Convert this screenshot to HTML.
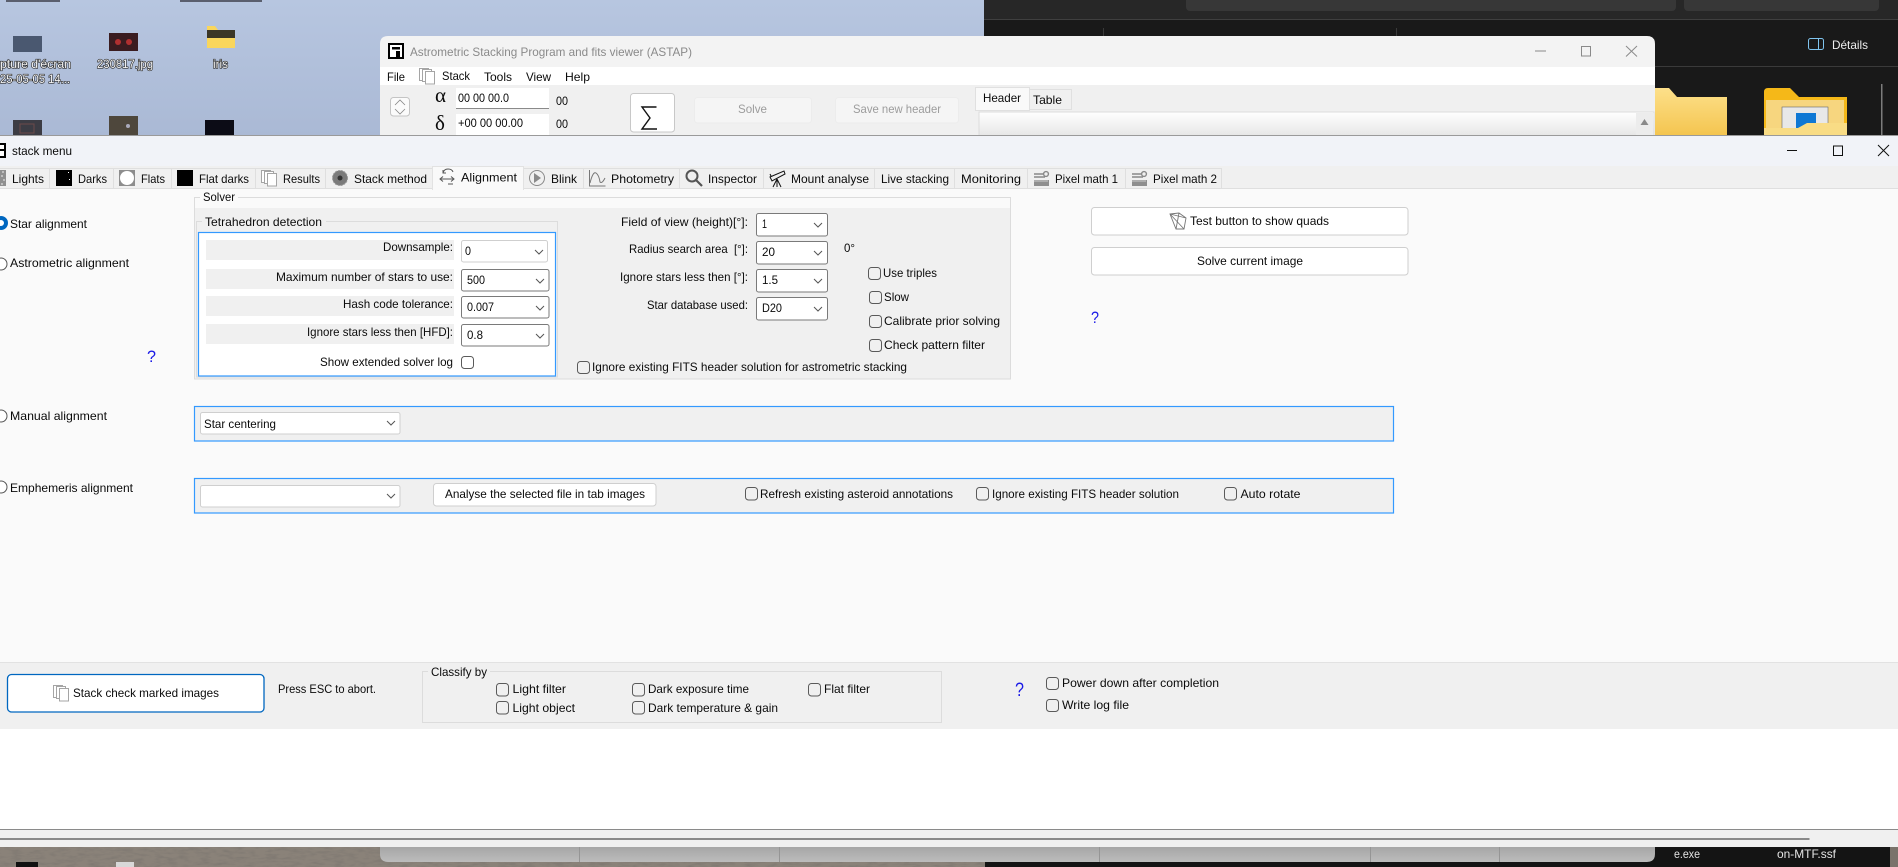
<!DOCTYPE html>
<html lang="en"><head><meta charset="utf-8"><title>stack menu</title>
<style>
html,body{margin:0;padding:0;width:1898px;height:867px;overflow:hidden;background:#b5c4de}
svg{display:block}
text{font-family:"Liberation Sans",sans-serif;font-size:12px;fill:#0a0a0a;white-space:pre}
.g{fill:#8a8a8a}.gd{fill:#9c9c9c}
.q{fill:#1a1ae6;font-size:17px}
.dk{fill:#f4f4f4;stroke:#2b2b2b;stroke-width:1.3px;paint-order:stroke}
.cb{fill:none;stroke:#5a5a5a;stroke-width:1}
.cmb{fill:#fff;stroke:#7a7a7a;stroke-width:1}
.cml{fill:#fff;stroke:#cfcfcf;stroke-width:1}
.chev{fill:none;stroke:#555;stroke-width:1}
.lbl{fill:#f0f0f0}
.grp{fill:none;stroke:#dcdcdc;stroke-width:1}
.blue{fill:#f0f0f0;stroke:#3399ff;stroke-width:1.2}
.btn{fill:#fff;stroke:#cfcfcf;stroke-width:1}
.tabd{stroke:#dfdfdf;stroke-width:1}
.win{stroke:#8a8a8a;stroke-width:1;fill:none}
.wint{stroke:#111;stroke-width:1;fill:none}
.radio{fill:#fff;stroke:#555;stroke-width:1}
</style></head><body>
<svg xmlns="http://www.w3.org/2000/svg" width="1898" height="867" viewBox="0 0 1898 867">
<defs>
<linearGradient id="desk" x1="0" y1="0" x2="0" y2="1"><stop offset="0" stop-color="#b7c6e0"/><stop offset="1" stop-color="#aab9d5"/></linearGradient>
<linearGradient id="strip" x1="0" y1="0" x2="0" y2="1"><stop offset="0" stop-color="#a6a6a6"/><stop offset="1" stop-color="#bcbcbc"/></linearGradient>
<linearGradient id="memo" x1="0" y1="0" x2="0" y2="1"><stop offset="0" stop-color="#ffffff"/><stop offset="1" stop-color="#e6e6e6"/></linearGradient>
<linearGradient id="fold" x1="0" y1="0" x2="0" y2="1"><stop offset="0" stop-color="#fde08a"/><stop offset="1" stop-color="#f4c550"/></linearGradient>
<filter id="sand" x="0" y="0" width="100%" height="100%"><feTurbulence type="fractalNoise" baseFrequency="0.09 0.35" numOctaves="3" seed="4"/><feColorMatrix values="0 0 0 0 0.2  0 0 0 0 0.18  0 0 0 0 0.16  1.8 0 0 0 -0.75"/></filter>
<g id="pages" fill="#fff" stroke="#a5a5a5" stroke-width="1"><rect x="0.5" y="0.5" width="9" height="12"/><rect x="3.5" y="1.5" width="9" height="12"/><rect x="6.5" y="3.5" width="9" height="12.5"/></g>
<g id="pm"><rect x="0" y="9" width="15" height="6" fill="#8f8f8f"/><path d="M1 9v2M3 9v2M5 9v2M7 9v2M9 9v2M11 9v2M13 9v2" stroke="#ddd" stroke-width=".8"/><path d="M0 3h9M0 6h11" stroke="#888" stroke-width="1.6" fill="none"/><circle cx="12" cy="3" r="2.4" fill="none" stroke="#888" stroke-width="1.4"/></g>
</defs>

<!-- desktop -->
<rect width="1898" height="136" fill="url(#desk)"/>
<rect x="6" y="0" width="54" height="2" fill="#5a5f6e"/><rect x="180" y="0" width="82" height="2" fill="#5a5f6e"/>
<rect x="13" y="36" width="29" height="16" fill="#4a5870"/>
<rect x="109" y="33" width="29" height="18" fill="#3a1c20"/><circle cx="118" cy="42" r="3" fill="#b03030"/><circle cx="129" cy="42" r="3" fill="#b03030"/>
<path d="M207 26h8l3 4h17v18h-28z" fill="#f9d65c"/><rect x="207" y="30" width="28" height="8" fill="#3b3626"/>
<text class="dk" x="0" y="68" textLength="71" lengthAdjust="spacingAndGlyphs">pture d'écran</text>
<text class="dk" x="0" y="83" textLength="70" lengthAdjust="spacingAndGlyphs">25-05-05 14...</text>
<text class="dk" x="97" y="68" textLength="56" lengthAdjust="spacingAndGlyphs">230817.jpg</text>
<text class="dk" x="213" y="68" textLength="15" lengthAdjust="spacingAndGlyphs">iris</text>
<rect x="13" y="120" width="29" height="16" fill="#3c3c44"/><rect x="20" y="124" width="14" height="9" fill="none" stroke="#6c4a4a"/>
<rect x="109" y="116" width="29" height="20" fill="#4e473c"/><circle cx="128" cy="126" r="2" fill="#aab"/>
<rect x="205" y="120" width="29" height="16" fill="#0c0c16"/>

<!-- dark explorer -->
<rect x="984" y="0" width="914" height="136" fill="#191919"/>
<rect x="984" y="0" width="914" height="19" fill="#272727"/>
<rect x="984" y="19" width="914" height="1" fill="#3f3f3f"/>
<rect x="1186" y="-6" width="490" height="17" rx="4" fill="#373737"/>
<rect x="1684" y="-6" width="195" height="17" rx="4" fill="#373737"/>
<rect x="1103" y="28" width="1" height="10" fill="#3a3a3a"/><rect x="1396" y="28" width="1" height="10" fill="#3a3a3a"/>
<rect x="984" y="66" width="914" height="1" fill="#3a3a3a"/>
<rect x="1808.5" y="38.5" width="15" height="11" rx="2" fill="none" stroke="#7fc4ee"/><rect x="1818" y="39" width="1" height="10" fill="#7fc4ee"/>
<text x="1832" y="49" textLength="36" lengthAdjust="spacingAndGlyphs" style="fill:#eee">Détails</text>
<path d="M1655 88h14l8 9h50v38h-72z" fill="url(#fold)"/>
<path d="M1764 92q0-4 4-4h22l9 9h48v38h-83z" fill="#f5b818"/>
<rect x="1766" y="100" width="78" height="35" fill="#f7d67f"/>
<rect x="1782" y="107" width="46" height="28" fill="#e8e8e8" stroke="#666" stroke-width=".6"/><rect x="1796" y="113" width="20" height="20" fill="#0f78d4"/>
<path d="M1764 128h34l9-5h40v12h-83z" fill="#f9dc85"/>
<rect x="1881" y="84" width="1.5" height="52" fill="#7c7c7c"/>

<!-- ASTAP window -->
<path d="M380 136V44q0-8 8-8h1259q8 0 8 8v92z" fill="#f3f3f3"/>
<rect x="380" y="67" width="1275" height="18" fill="#ffffff"/>
<rect x="380" y="85" width="1275" height="51" fill="#f0f0f0"/>
<rect x="388" y="43" width="16" height="16" fill="#000"/><rect x="390" y="45" width="12" height="12" fill="#fff"/><rect x="392" y="47" width="8" height="2.5" fill="#000"/><rect x="396" y="51" width="4" height="6" fill="#000"/>
<text class="g" x="410" y="56" textLength="282" lengthAdjust="spacingAndGlyphs">Astrometric Stacking Program and fits viewer (ASTAP)</text>
<path d="M1535 51h11" stroke="#8a8a8a"/><rect class="win" x="1581.5" y="46.5" width="9" height="9.5"/><path class="win" d="M1626 46l11 10.500M1637 46l-11 10.500"/>
<text x="387" y="81" textLength="18" lengthAdjust="spacingAndGlyphs">File</text>
<use href="#pages" x="419" y="68"/>
<text x="442" y="80" textLength="28" lengthAdjust="spacingAndGlyphs">Stack</text>
<text x="484" y="81" textLength="28" lengthAdjust="spacingAndGlyphs">Tools</text>
<text x="526" y="81" textLength="25" lengthAdjust="spacingAndGlyphs">View</text>
<text x="565" y="81" textLength="25" lengthAdjust="spacingAndGlyphs">Help</text>
<rect x="390.500" y="97.500" width="19" height="18.500" rx="3" fill="#fbfbfb" stroke="#c4c4c4"/>
<path d="M395 105l5-5 5 5M395 109l5 5 5-5" fill="none" stroke="#888" stroke-width=".8"/>
<text x="435" y="102" style="font-family:'Liberation Serif',serif;font-size:21px">α</text>
<text x="435" y="130" style="font-family:'Liberation Serif',serif;font-size:21px">δ</text>
<rect x="456" y="88" width="93" height="21" fill="#fff"/><rect x="456" y="108" width="93" height="1" fill="#8a8a8a"/>
<rect x="456" y="114" width="93" height="22" fill="#fff"/>
<text x="458" y="102" textLength="51" lengthAdjust="spacingAndGlyphs">00 00 00.0</text>
<text x="458" y="127" textLength="65" lengthAdjust="spacingAndGlyphs">+00 00 00.00</text>
<text x="556" y="105" textLength="12" lengthAdjust="spacingAndGlyphs">00</text>
<text x="556" y="128" textLength="12" lengthAdjust="spacingAndGlyphs">00</text>
<rect x="630.500" y="93.500" width="44" height="38.500" rx="3" fill="#fff" stroke="#c8c8c8"/>
<path d="M656.500 107h-14.500l8 11-8 11h15" fill="none" stroke="#111" stroke-width="1.400"/>
<rect x="694.500" y="97.500" width="117" height="25.500" rx="3" fill="#f5f5f5" stroke="#ececec"/>
<text class="gd" x="738" y="113" textLength="29" lengthAdjust="spacingAndGlyphs">Solve</text>
<rect x="835.500" y="97.500" width="123" height="25.500" rx="3" fill="#f5f5f5" stroke="#ececec"/>
<text class="gd" x="853" y="113" textLength="88" lengthAdjust="spacingAndGlyphs">Save new header</text>
<rect x="1029.500" y="89.500" width="42" height="20" fill="#f0f0f0" stroke="#e0e0e0"/>
<rect x="975.500" y="87.500" width="54" height="23" fill="#f9f9f9" stroke="#e0e0e0"/>
<text x="983" y="102" textLength="38" lengthAdjust="spacingAndGlyphs">Header</text>
<text x="1033" y="104" textLength="29" lengthAdjust="spacingAndGlyphs">Table</text>
<rect x="979" y="112" width="675" height="24" fill="url(#memo)" stroke="#dcdcdc"/>
<rect x="1636" y="113" width="17" height="23" fill="#ececec"/><path d="M1644.500 119l-4 6h8z" fill="#8a8a8a"/>

<!-- stack menu window -->
<rect x="0" y="135" width="1898" height="1" fill="#9a9a9a"/>
<rect x="0" y="136" width="1898" height="30" fill="#f1f3f8"/>
<rect x="0" y="166" width="1898" height="22" fill="#f0f0f0"/>
<rect x="0" y="188" width="1898" height="474" fill="#fafafa"/>
<rect x="-10" y="143" width="16" height="15" fill="#000"/><rect x="-7" y="145" width="11" height="4" fill="#fff"/><rect x="-7" y="151" width="11" height="5" fill="#fff"/>
<text x="12" y="155" textLength="60" lengthAdjust="spacingAndGlyphs">stack menu</text>
<path d="M1787 150.500h10" stroke="#111"/><rect class="wint" x="1833.500" y="146" width="9" height="9.500"/><path class="wint" d="M1878 145l11 11M1889 145l-11 11"/>

<!-- tabs -->
<rect x="0" y="168" width="1221" height="20" fill="#f0f0f0"/>
<path class="tabd" d="M49.500 168v20M113.500 168v20M171.500 168v20M255.500 168v20M325.500 168v20M583.500 168v20M679.500 168v20M763.500 168v20M874.500 168v20M954.500 168v20M1027.500 168v20M1125.500 168v20M1221.500 168v20M0 168.500H432"/>
<path class="tabd" d="M524 168.500H1221M0 188.500H432M524 188.500H1898"/>
<rect x="432.500" y="166.500" width="91" height="23" fill="#f9f9f9" stroke="#e2e2e2"/><rect x="433" y="186" width="90" height="4" fill="#f9f9f9"/>
<rect x="0" y="170" width="6" height="16" fill="#8f8f8f"/><path d="M2 172h2M1 176h2M3 180h2M1 184h2" stroke="#eee"/>
<text x="12" y="183" textLength="32" lengthAdjust="spacingAndGlyphs">Lights</text>
<rect x="56" y="170" width="16" height="16" fill="#000"/><rect x="68" y="172" width="1" height="1" fill="#fff"/><rect x="69" y="179" width="1" height="1" fill="#fff"/>
<text x="78" y="183" textLength="29" lengthAdjust="spacingAndGlyphs">Darks</text>
<rect x="119" y="170" width="16" height="16" fill="#8d8d8d"/><circle cx="127" cy="178" r="7" fill="#fff"/>
<text x="141" y="183" textLength="24" lengthAdjust="spacingAndGlyphs">Flats</text>
<rect x="177" y="170" width="16" height="16" fill="#000"/>
<text x="199" y="183" textLength="50" lengthAdjust="spacingAndGlyphs">Flat darks</text>
<use href="#pages" x="261" y="170"/>
<text x="283" y="183" textLength="37" lengthAdjust="spacingAndGlyphs">Results</text>
<circle cx="340" cy="178" r="7.500" fill="#7b7b7b" stroke="#999" stroke-dasharray="2 1"/><circle cx="340" cy="178" r="2.500" fill="#333"/>
<text x="354" y="183" textLength="73" lengthAdjust="spacingAndGlyphs">Stack method</text>
<path d="M440 179h14M443 176.500l-3 2.500 3 2.500M451 176.500l3 2.500-3 2.500M443 173q1-4 5-4t5 3M443 170v3h3M448 184h5" fill="none" stroke="#555" stroke-width="1"/>
<text x="461" y="181.500" textLength="56" lengthAdjust="spacingAndGlyphs">Alignment</text>
<circle cx="537" cy="178" r="7.500" fill="none" stroke="#8a8a8a" stroke-width="1"/><path d="M534 173l7 5-7 5z" fill="#8a8a8a"/>
<text x="551" y="183" textLength="26" lengthAdjust="spacingAndGlyphs">Blink</text>
<path d="M589.500 170v16h16M590 183q3-12 6-10t4 9q2 2 5-4" fill="none" stroke="#777"/>
<text x="611" y="183" textLength="63" lengthAdjust="spacingAndGlyphs">Photometry</text>
<circle cx="692" cy="176" r="5.500" fill="none" stroke="#555" stroke-width="2"/><path d="M696 180l6 6" stroke="#555" stroke-width="2.200"/>
<text x="708" y="183" textLength="49" lengthAdjust="spacingAndGlyphs">Inspector</text>
<path d="M770 177l14-6 1 3-13 7zM777 179l-4 8M777 179v8M777 179l4 8M771 176l-1-2" fill="none" stroke="#111" stroke-width="1"/>
<text x="791" y="183" textLength="78" lengthAdjust="spacingAndGlyphs">Mount analyse</text>
<text x="881" y="183" textLength="68" lengthAdjust="spacingAndGlyphs">Live stacking</text>
<text x="961" y="183" textLength="60" lengthAdjust="spacingAndGlyphs">Monitoring</text>
<use href="#pm" x="1034" y="171"/>
<text x="1055" y="183" textLength="63" lengthAdjust="spacingAndGlyphs">Pixel math 1</text>
<use href="#pm" x="1132" y="171"/>
<text x="1153" y="183" textLength="64" lengthAdjust="spacingAndGlyphs">Pixel math 2</text>

<!-- left radios -->
<circle cx="1" cy="223" r="5" fill="#fff" stroke="#0067c0" stroke-width="4"/>
<text x="10" y="228" textLength="77" lengthAdjust="spacingAndGlyphs">Star alignment</text>
<circle class="radio" cx="1" cy="264" r="6"/>
<text x="10" y="267" textLength="119" lengthAdjust="spacingAndGlyphs">Astrometric alignment</text>
<text class="q" x="147" y="362" textLength="9" lengthAdjust="spacingAndGlyphs">?</text>
<circle class="radio" cx="1" cy="416" r="6"/>
<text x="10" y="420" textLength="97" lengthAdjust="spacingAndGlyphs">Manual alignment</text>
<circle class="radio" cx="1" cy="487" r="6"/>
<text x="10" y="492" textLength="123" lengthAdjust="spacingAndGlyphs">Emphemeris alignment</text>

<!-- Solver group -->
<rect x="194.500" y="197.500" width="816" height="181.500" fill="#fafafa" stroke="#dcdcdc"/>
<rect x="195" y="208" width="815" height="170.500" fill="#f0f0f0"/>
<rect x="200" y="194" width="38" height="8" fill="#fafafa"/>
<text x="203" y="201" textLength="32" lengthAdjust="spacingAndGlyphs">Solver</text>
<rect class="grp" x="196.500" y="221.500" width="361" height="155.500"/>
<rect x="202" y="218" width="124" height="8" fill="#f0f0f0"/>
<text x="205" y="226" textLength="117" lengthAdjust="spacingAndGlyphs">Tetrahedron detection</text>
<rect x="198.500" y="232.500" width="357" height="143.500" fill="#fff" stroke="#3399ff" stroke-width="1.200"/>
<rect class="lbl" x="206" y="240" width="248" height="20"/>
<rect class="lbl" x="206" y="269" width="248" height="20"/>
<rect class="lbl" x="206" y="296" width="248" height="20"/>
<rect class="lbl" x="206" y="324" width="248" height="20"/>
<text x="383" y="251" textLength="70" lengthAdjust="spacingAndGlyphs">Downsample:</text>
<text x="276" y="281" textLength="177" lengthAdjust="spacingAndGlyphs">Maximum number of stars to use:</text>
<text x="343" y="308" textLength="110" lengthAdjust="spacingAndGlyphs">Hash code tolerance:</text>
<text x="307" y="336" textLength="146" lengthAdjust="spacingAndGlyphs">Ignore stars less then [HFD]:</text>
<text x="320" y="366" textLength="133" lengthAdjust="spacingAndGlyphs">Show extended solver log</text>
<rect class="cml" x="461.500" y="240.500" width="86" height="21.500" rx="2"/>
<rect class="cmb" x="461.500" y="269.500" width="87.500" height="21.500" rx="2"/>
<rect class="cmb" x="461.500" y="296.500" width="87.500" height="21.500" rx="2"/>
<rect class="cmb" x="461.500" y="324.500" width="87.500" height="21.500" rx="2"/>
<text x="465" y="255" textLength="6" lengthAdjust="spacingAndGlyphs">0</text>
<text x="467" y="284" textLength="18" lengthAdjust="spacingAndGlyphs">500</text>
<text x="467" y="311" textLength="27" lengthAdjust="spacingAndGlyphs">0.007</text>
<text x="467" y="339" textLength="16" lengthAdjust="spacingAndGlyphs">0.8</text>
<path class="chev" d="M535 250l4 4 4-4M536 279l4 4 4-4M536 306l4 4 4-4M536 334l4 4 4-4"/>
<rect class="cb" x="461.500" y="356.500" width="12" height="12" rx="3"/>

<text x="621" y="226" textLength="127" lengthAdjust="spacingAndGlyphs">Field of view (height)[°]:</text>
<text x="629" y="253" textLength="119" lengthAdjust="spacingAndGlyphs">Radius search area  [°]:</text>
<text x="620" y="281" textLength="128" lengthAdjust="spacingAndGlyphs">Ignore stars less then [°]:</text>
<text x="647" y="309" textLength="101" lengthAdjust="spacingAndGlyphs">Star database used:</text>
<rect class="cmb" x="756.500" y="213.500" width="71" height="22.500" rx="2"/>
<rect class="cmb" x="756.500" y="241.500" width="71" height="22.500" rx="2"/>
<rect class="cmb" x="756.500" y="269.500" width="71" height="22.500" rx="2"/>
<rect class="cmb" x="756.500" y="297.500" width="71" height="22.500" rx="2"/>
<text x="762" y="228" textLength="5" lengthAdjust="spacingAndGlyphs">1</text>
<text x="762" y="256" textLength="13" lengthAdjust="spacingAndGlyphs">20</text>
<text x="762" y="284" textLength="16" lengthAdjust="spacingAndGlyphs">1.5</text>
<text x="762" y="312" textLength="20" lengthAdjust="spacingAndGlyphs">D20</text>
<path class="chev" d="M814 223l4 4 4-4M814 251l4 4 4-4M814 279l4 4 4-4M814 307l4 4 4-4"/>
<text x="844" y="252" textLength="11" lengthAdjust="spacingAndGlyphs">0°</text>
<rect class="cb" x="868.500" y="267.500" width="12" height="12" rx="3"/>
<text x="883" y="277" textLength="54" lengthAdjust="spacingAndGlyphs">Use triples</text>
<rect class="cb" x="869.500" y="291.500" width="12" height="12" rx="3"/>
<text x="884" y="301" textLength="25" lengthAdjust="spacingAndGlyphs">Slow</text>
<rect class="cb" x="869.500" y="315.500" width="12" height="12" rx="3"/>
<text x="884" y="325" textLength="116" lengthAdjust="spacingAndGlyphs">Calibrate prior solving</text>
<rect class="cb" x="869.500" y="339.500" width="12" height="12" rx="3"/>
<text x="884" y="349" textLength="101" lengthAdjust="spacingAndGlyphs">Check pattern filter</text>
<rect class="cb" x="577.500" y="361.500" width="12" height="12" rx="3"/>
<text x="592" y="371" textLength="315" lengthAdjust="spacingAndGlyphs">Ignore existing FITS header solution for astrometric stacking</text>

<!-- right buttons -->
<rect class="btn" x="1091.500" y="207.500" width="316.500" height="27.500" rx="3"/>
<path d="M1170 214l9-1 7 5-2 11-8 0zM1170 214l14 15M1179 213l-3 16M1186 218l-16-4" fill="none" stroke="#777" stroke-width=".9"/>
<text x="1190" y="225" textLength="139" lengthAdjust="spacingAndGlyphs">Test button to show quads</text>
<rect class="btn" x="1091.500" y="247.500" width="316.500" height="27.500" rx="3"/>
<text x="1197" y="265" textLength="106" lengthAdjust="spacingAndGlyphs">Solve current image</text>
<text class="q" x="1091" y="323" textLength="8" lengthAdjust="spacingAndGlyphs">?</text>

<!-- panels -->
<rect class="blue" x="194.500" y="406.500" width="1199" height="34.500"/>
<rect class="btn" x="200.500" y="412.500" width="199.500" height="21.500" rx="2"/>
<text x="204" y="428" textLength="72" lengthAdjust="spacingAndGlyphs">Star centering</text>
<path class="chev" d="M387 421l4 4 4-4"/>
<rect class="blue" x="194.500" y="478.500" width="1199" height="34.500"/>
<rect class="btn" x="200.500" y="485.500" width="199.500" height="21.500" rx="2"/>
<path class="chev" d="M387 494l4 4 4-4"/>
<rect class="btn" x="433.500" y="483.500" width="222.500" height="22.500" rx="3"/>
<text x="445" y="498" textLength="200" lengthAdjust="spacingAndGlyphs">Analyse the selected file in tab images</text>
<rect class="cb" x="745.500" y="487.500" width="12" height="12.500" rx="3"/>
<text x="760" y="498" textLength="193" lengthAdjust="spacingAndGlyphs">Refresh existing asteroid annotations</text>
<rect class="cb" x="976.500" y="487.500" width="12" height="12.500" rx="3"/>
<text x="992" y="498" textLength="187" lengthAdjust="spacingAndGlyphs">Ignore existing FITS header solution</text>
<rect class="cb" x="1224.500" y="487.500" width="12" height="12.500" rx="3"/>
<text x="1240.500" y="498" textLength="60" lengthAdjust="spacingAndGlyphs">Auto rotate</text>

<!-- bottom panel -->
<rect x="0" y="662" width="1898" height="67" fill="#f0f0f0"/>
<rect x="0" y="662" width="1898" height="1" fill="#e2e2e2"/>
<rect x="0" y="729" width="1898" height="100" fill="#ffffff"/>
<rect x="7.500" y="674.500" width="256.500" height="37.500" rx="4" fill="#fff" stroke="#0067c0" stroke-width="1.300"/>
<use href="#pages" x="53" y="685"/>
<text x="73" y="697" textLength="146" lengthAdjust="spacingAndGlyphs">Stack check marked images</text>
<text x="278" y="693" textLength="98" lengthAdjust="spacingAndGlyphs">Press ESC to abort.</text>
<rect class="grp" x="422.500" y="671.500" width="519" height="51"/>
<rect x="428" y="668" width="62" height="10" fill="#f0f0f0"/>
<text x="431" y="676" textLength="56" lengthAdjust="spacingAndGlyphs">Classify by</text>
<rect class="cb" x="496.500" y="683.500" width="12" height="12.500" rx="3"/>
<text x="512.500" y="693" textLength="53.500" lengthAdjust="spacingAndGlyphs">Light filter</text>
<rect class="cb" x="496.500" y="701.500" width="12" height="12.500" rx="3"/>
<text x="512.500" y="712" textLength="62.500" lengthAdjust="spacingAndGlyphs">Light object</text>
<rect class="cb" x="632.500" y="683.500" width="12" height="12.500" rx="3"/>
<text x="648" y="693" textLength="101" lengthAdjust="spacingAndGlyphs">Dark exposure time</text>
<rect class="cb" x="632.500" y="701.500" width="12" height="12.500" rx="3"/>
<text x="648" y="712" textLength="130" lengthAdjust="spacingAndGlyphs">Dark temperature &amp; gain</text>
<rect class="cb" x="808.500" y="683.500" width="12" height="12.500" rx="3"/>
<text x="824" y="693" textLength="46" lengthAdjust="spacingAndGlyphs">Flat filter</text>
<text class="q" x="1015" y="696" textLength="9" lengthAdjust="spacingAndGlyphs" style="font-size:19px">?</text>
<rect class="cb" x="1046.500" y="677.500" width="12" height="12" rx="3"/>
<text x="1062" y="687" textLength="157" lengthAdjust="spacingAndGlyphs">Power down after completion</text>
<rect class="cb" x="1046.500" y="699.500" width="12" height="12" rx="3"/>
<text x="1062" y="709" textLength="67" lengthAdjust="spacingAndGlyphs">Write log file</text>

<!-- bottom strip -->
<rect x="0" y="829" width="1898" height="18" fill="#f0f0f0"/>
<rect x="0" y="829" width="1898" height="1" fill="#8a8a8a"/>
<rect x="0" y="838" width="1809.500" height="2" fill="#8a8a8a"/>
<rect x="0" y="847" width="985" height="20" fill="#8a8279"/>
<rect x="0" y="847" width="985" height="20" filter="url(#sand)"/>
<rect x="16" y="862" width="22" height="5" fill="#111"/><rect x="116" y="862" width="18" height="5" fill="#d8d8d8"/>
<rect x="985" y="847" width="905" height="20" fill="#141414"/>
<rect x="1890" y="847" width="8" height="20" fill="#7a736b"/>
<path d="M380 847H1655V854q0 8-8 8H388q-8 0-8-8z" fill="url(#strip)"/>
<path d="M579.500 847v15M779.500 847v15M1099.500 847v15M1370.500 847v15M1499.500 847v15" stroke="#959595"/>
<text x="1674" y="858" textLength="26" lengthAdjust="spacingAndGlyphs" style="fill:#e4e4e4">e.exe</text>
<text x="1777" y="858" textLength="59" lengthAdjust="spacingAndGlyphs" style="fill:#e4e4e4">on-MTF.ssf</text>
</svg>
</body></html>
